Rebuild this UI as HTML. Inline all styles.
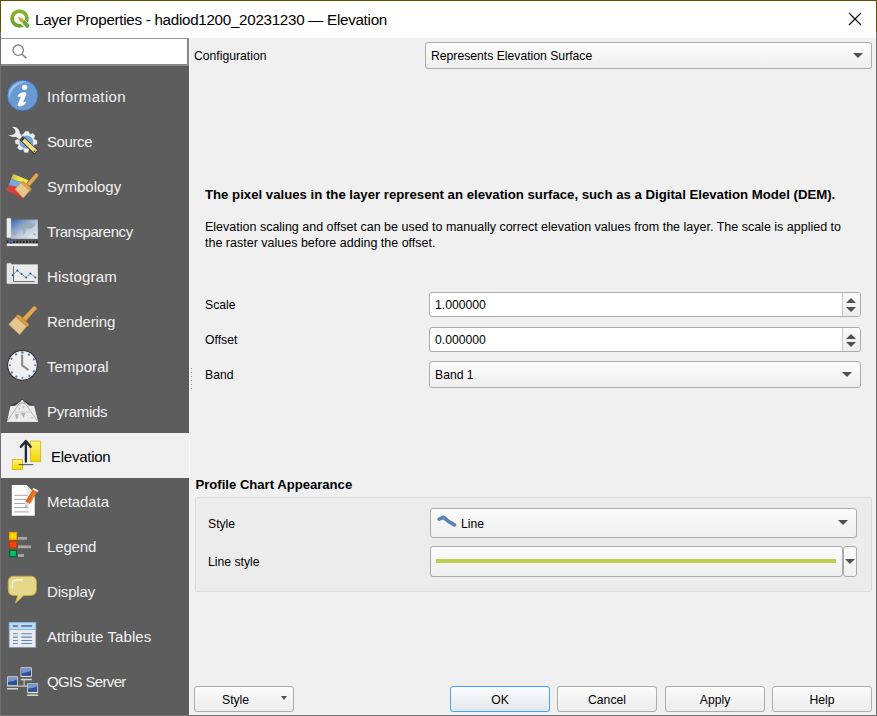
<!DOCTYPE html>
<html><head><meta charset="utf-8">
<style>
*{box-sizing:border-box;margin:0;padding:0}
html,body{width:877px;height:716px;overflow:hidden;background:#f0f0f0;font-family:"Liberation Sans",sans-serif;color:#000}
.a{position:absolute}
.t{position:absolute;white-space:nowrap;line-height:1}
.r{font-size:12.2px}
.b{font-weight:bold;font-size:13.2px}
.side{position:absolute;left:1px;top:66px;width:188px;height:649px;background:#5d5d5d}
.it{position:absolute;left:0;width:188px;height:45px}
.it .lbl{position:absolute;left:46px;top:15.6px;font-size:15px;line-height:1;color:#f2f2f2;white-space:nowrap}
.it svg{position:absolute;left:3px;top:4px;width:40px;height:40px}
.combo{position:absolute;border:1px solid #acacac;border-radius:3px;background:linear-gradient(#fcfcfc,#efefef)}
.inp{position:absolute;border:1px solid #acacac;border-radius:3px;background:#fff}
.btn{position:absolute;border:1px solid #adadad;border-radius:3px;background:linear-gradient(#fbfbfb,#ececec);text-align:center}
.arr{position:absolute;width:0;height:0;border-left:5px solid transparent;border-right:5px solid transparent;border-top:5px solid #505050}
</style></head><body>
<!-- title bar -->
<div class="a" style="left:0;top:0;width:877px;height:38px;background:#fff"></div>
<div class="a" style="left:0;top:0;width:877px;height:1px;background:#644e00"></div>
<div class="a" style="left:0;top:0;width:1px;height:32px;background:#644e00"></div>
<div class="a" style="left:876px;top:0;width:1px;height:32px;background:#644e00"></div>
<div class="a" style="left:0;top:32px;width:1px;height:684px;background:#707070"></div>
<div class="a" style="left:876px;top:32px;width:1px;height:684px;background:#707070"></div>
<div class="a" style="left:0;top:715px;width:877px;height:1px;background:#707070"></div>
<svg class="a" style="left:6px;top:5px" width="28" height="28" viewBox="0 0 716 716">
<defs><linearGradient id="qr" x1="0" y1="0" x2="0" y2="1"><stop offset="0" stop-color="#8ab52a"/><stop offset="1" stop-color="#69a12e"/></linearGradient>
<linearGradient id="qt" x1="0" y1="0" x2="1" y2="1"><stop offset="0" stop-color="#f07a20"/><stop offset="0.6" stop-color="#f0a030"/><stop offset="1" stop-color="#d8e050"/></linearGradient></defs>
<ellipse cx="345" cy="345" rx="190" ry="188" fill="none" stroke="url(#qr)" stroke-width="95"/>
<path d="M380,380 L640,640" stroke="#fff" stroke-width="150"/>
<path d="M305,300 L420,345 L470,395 L405,460 L355,410 Z" fill="url(#qt)"/>
<path d="M410,440 L470,380 L590,500 C600,520 590,560 570,580 C550,595 525,590 510,575 Z" fill="#66a83c"/>
</svg>
<div class="t" style="left:35px;top:12.1px;font-size:15.2px;letter-spacing:-0.29px">Layer Properties - hadiod1200_20231230 — Elevation</div>
<svg class="a" style="left:848px;top:12px" width="14" height="14" viewBox="0 0 14 14"><path d="M1 1L13 13M13 1L1 13" stroke="#000" stroke-width="1.1"/></svg>

<!-- search -->
<div class="a" style="left:1px;top:38px;width:188px;height:28px;background:#fff;border-top:1px solid #999;border-right:2px solid #888;border-bottom:2px solid #8a8a8a"></div>
<svg class="a" style="left:10px;top:42px" width="20" height="20" viewBox="0 0 20 20"><circle cx="8.2" cy="8.2" r="5.2" fill="none" stroke="#7f7f7f" stroke-width="1.3"/><path d="M12 12L16.3 16.3" stroke="#7f7f7f" stroke-width="1.6"/></svg>

<!-- sidebar -->
<div class="side">
<!-- 0 Information -->
<div class="it" style="top:7px">
<svg viewBox="0 0 716 716"><circle cx="332" cy="330" r="278" fill="#6a9ad2" stroke="#3d629c" stroke-width="16"/>
<path d="M90,360 C80,220 180,90 390,80 C250,110 130,200 95,360 Z" fill="#a5c4ea" stroke="#a5c4ea" stroke-width="10" stroke-linejoin="round"/>
<circle cx="368" cy="185" r="48" fill="#fff"/>
<path d="M248,338 C270,290 340,262 392,280 C405,290 402,310 396,325 L340,450 C360,452 378,440 392,448 C390,480 330,530 275,528 C240,525 240,500 250,478 L305,355 C290,350 268,360 248,350 Z" fill="#fff"/>
</svg><div class="lbl" style="letter-spacing:0.360px">Information</div></div>
<!-- 1 Source -->
<div class="it" style="top:52px">
<svg viewBox="0 0 716 716">
<path fill="#ededed" stroke="#d0d0d0" stroke-width="6" d="M385,165 L445,168 L460,222 L515,200 L555,245 L530,300 L590,330 L590,395 L530,410 L545,470 L500,510 L450,480 L430,545 L365,545 L345,485 L285,505 L240,460 L265,405 L205,385 L200,325 L258,305 L235,250 L280,205 L335,230 Z"/>
<ellipse cx="400" cy="360" rx="125" ry="120" fill="#75a3db"/>
<path d="M120,85 C200,60 285,110 290,195 L330,265 L275,320 L215,275 C150,285 80,260 65,215 C110,240 175,230 195,190 C210,150 175,110 120,85 Z" fill="#ebebeb" stroke="#333" stroke-width="10" stroke-linejoin="round"/>
<path d="M280,320 L345,255 L615,505 L545,580 Z" fill="#2e2e2e"/>
<path d="M300,322 L348,275 L597,505 L545,558 Z" fill="#f3dc80"/>
<path d="M300,322 L348,275 L370,296 L322,343 Z" fill="#2e2e2e"/>
<circle cx="545" cy="525" r="16" fill="#3a3a3a"/>
</svg><div class="lbl" style="letter-spacing:-0.400px">Source</div></div>
<!-- 2 Symbology -->
<div class="it" style="top:97px">
<svg viewBox="0 0 716 716">
<defs><linearGradient id="syy" x1="0" y1="0" x2="1" y2="0"><stop offset="0" stop-color="#c8b640"/><stop offset="0.5" stop-color="#f5e64a"/><stop offset="1" stop-color="#fbe840"/></linearGradient>
<linearGradient id="syr" x1="0" y1="0" x2="1" y2="0"><stop offset="0" stop-color="#c84848"/><stop offset="1" stop-color="#ff2a20"/></linearGradient>
<pattern id="grid" width="34" height="34" patternUnits="userSpaceOnUse" patternTransform="rotate(43)"><rect width="34" height="34" fill="#eccf98"/><path d="M0,0 L34,0 M0,0 L0,34" stroke="#c9a060" stroke-width="7"/></pattern></defs>
<path d="M165,125 L440,235 L400,300 L125,215 Z" fill="url(#syy)"/>
<path d="M125,215 L400,300 L350,380 L85,325 Z" fill="#78a8dc"/>
<path d="M85,325 L350,380 L345,560 L40,415 Z" fill="url(#syr)"/>
<path d="M565,118 C595,110 625,140 605,168 L455,345 L410,300 Z" fill="#e2aa55" stroke="#c48a38" stroke-width="8"/>
<path d="M300,280 C310,255 345,250 365,265 L480,380 C495,405 480,430 455,430 Z" fill="#dea048" stroke="#c48a38" stroke-width="8"/>
<path d="M195,398 L305,285 L460,425 L345,555 Z" fill="url(#grid)" stroke="#c9964e" stroke-width="8"/>
</svg><div class="lbl">Symbology</div></div>
<!-- 3 Transparency -->
<div class="it" style="top:142px">
<svg viewBox="0 0 716 716">
<defs><linearGradient id="tg" x1="0" y1="0" x2="1" y2="1"><stop offset="0" stop-color="#3466ad"/><stop offset="0.55" stop-color="#b8c8dc"/><stop offset="1" stop-color="#eef1f5"/></linearGradient></defs>
<rect x="125" y="135" width="480" height="345" fill="url(#tg)"/>
<path d="M290,290 C330,200 450,180 570,205 L540,260 L470,300 L400,290 L370,380 L350,410 L330,320 Z" fill="#9aa6b4" opacity="0.8"/>
<path d="M160,300 C200,290 240,330 230,380 L200,430 L180,370 Z" fill="#9aa6b4" opacity="0.8"/>
<path d="M520,380 C550,370 580,390 570,420 L525,410 Z" fill="#9aa6b4" opacity="0.8"/>
<rect x="50" y="110" width="75" height="350" rx="12" fill="#ececec" stroke="#d8d8d8" stroke-width="6"/>
<rect x="50" y="512" width="555" height="46" fill="#6e6e6e"/>
<g fill="#1e1e1e"><rect x="50" y="512" width="30" height="40"/><rect x="165" y="512" width="32" height="40"/><rect x="222" y="512" width="32" height="40"/><rect x="280" y="512" width="32" height="40"/><rect x="338" y="512" width="32" height="40"/><rect x="396" y="512" width="32" height="40"/><rect x="454" y="512" width="32" height="40"/><rect x="512" y="512" width="32" height="40"/><rect x="570" y="512" width="32" height="40"/></g>
<rect x="50" y="565" width="555" height="45" fill="#ededed"/>
<rect x="105" y="500" width="32" height="75" rx="8" fill="#2e5ea8"/>
</svg><div class="lbl" style="letter-spacing:-0.455px">Transparency</div></div>
<!-- 4 Histogram -->
<div class="it" style="top:187px">
<svg viewBox="0 0 716 716">
<rect x="125" y="135" width="480" height="345" fill="#ececec" stroke="#dadada" stroke-width="6"/>
<rect x="50" y="110" width="80" height="370" rx="14" fill="#e8e8e8" stroke="#d0d0d0" stroke-width="6"/>
<path d="M170,165 L170,440 L550,440" fill="none" stroke="#555" stroke-width="16"/>
<path d="M155,325 L238,243 L315,305 L395,365 L472,295 L562,365" fill="none" stroke="#3c68a8" stroke-width="12"/>
<g fill="#2e5a9c"><circle cx="155" cy="325" r="18"/><circle cx="238" cy="243" r="18"/><circle cx="315" cy="305" r="18"/><circle cx="395" cy="365" r="18"/><circle cx="472" cy="295" r="18"/><circle cx="562" cy="365" r="18"/></g>
</svg><div class="lbl" style="letter-spacing:0.175px">Histogram</div></div>
<!-- 5 Rendering -->
<div class="it" style="top:232px">
<svg viewBox="0 0 716 716">
<path d="M520,90 C560,60 600,100 575,130 L390,340 L330,290 Z" fill="#e4a850" stroke="#c88a30" stroke-width="10"/>
<path d="M215,255 C230,225 270,225 290,245 L440,395 C450,420 430,445 405,440 Z" fill="#dd9a3e" stroke="#c88530" stroke-width="8"/>
<path d="M85,400 L215,265 L400,440 L280,585 Z" fill="url(#grid)" stroke="#d49a50" stroke-width="10"/>
</svg><div class="lbl" style="letter-spacing:-0.100px">Rendering</div></div>
<!-- 6 Temporal -->
<div class="it" style="top:277px">
<svg viewBox="0 0 716 716">
<circle cx="330" cy="328" r="265" fill="#efefef" stroke="#2e2e2e" stroke-width="18"/>
<g fill="#4a7cc0" transform="translate(0,0)"><circle cx="330" cy="100" r="22"/><circle cx="445" cy="138" r="20"/><circle cx="535" cy="222" r="20"/><circle cx="558" cy="328" r="18"/><circle cx="535" cy="438" r="20"/><circle cx="455" cy="518" r="20"/><circle cx="330" cy="552" r="18"/><circle cx="222" cy="532" r="20"/><circle cx="140" cy="455" r="20"/><circle cx="105" cy="328" r="18"/><circle cx="135" cy="212" r="20"/><circle cx="215" cy="132" r="20"/></g>
<path d="M325,140 L325,328 L440,412" fill="none" stroke="#858a85" stroke-width="36" stroke-linejoin="round"/>
</svg><div class="lbl">Temporal</div></div>
<!-- 7 Pyramids -->
<div class="it" style="top:322px">
<svg viewBox="0 0 716 716">
<path d="M55,530 L115,250 L200,250 L325,130 L450,250 L540,250 L610,530 Z" fill="#ececec"/>
<path d="M120,248 L230,200 L270,170 L325,128 L380,170 L420,200 L540,248" fill="none" stroke="#2a2a2a" stroke-width="16" stroke-linejoin="round"/>
<path d="M200,250 L540,250" stroke="#d8d8d8" stroke-width="10"/>
<path d="M60,520 L300,165 M350,165 L600,520" fill="none" stroke="#6a6a6a" stroke-width="8"/>
<path d="M190,360 L470,360" stroke="#c0c0c0" stroke-width="14"/>
<g fill="none" stroke="#777" stroke-width="10"><circle cx="290" cy="190" r="22"/><circle cx="355" cy="190" r="22"/></g>
<path d="M195,400 L265,395 L240,490 L215,480 Z M300,375 L385,378 L350,470 Z M480,455 L530,450 L510,480 Z M255,285 L290,280 L280,325 Z M330,255 L365,260 L350,310 Z" fill="#b4b4b4"/>
<path d="M55,528 L610,528" stroke="#f6f6f6" stroke-width="14"/>
</svg><div class="lbl" style="letter-spacing:-0.286px">Pyramids</div></div>
<!-- 8 Elevation selected -->
<div class="it" style="top:367px;background:#f0f0f0">
<svg viewBox="0 0 716 716" style="left:7px">
<defs><linearGradient id="yg" x1="0" y1="0" x2="0" y2="1"><stop offset="0" stop-color="#fff27a"/><stop offset="1" stop-color="#f0d800"/></linearGradient></defs>
<rect x="400" y="72" width="185" height="365" fill="url(#yg)" stroke="#d4b400" stroke-width="14"/>
<rect x="75" y="402" width="185" height="180" fill="url(#yg)" stroke="#d4b400" stroke-width="14"/>
<path d="M320,440 L320,80 M230,175 L320,70 L405,175" fill="none" stroke="#25292d" stroke-width="42" stroke-linecap="round" stroke-linejoin="round"/>
<path d="M190,495 L455,495" stroke="#3c3c3c" stroke-width="16"/>
</svg><div class="lbl" style="left:50px;color:#000;letter-spacing:-0.25px">Elevation</div></div>
<!-- 9 Metadata -->
<div class="it" style="top:412px">
<svg viewBox="0 0 716 716">
<path d="M140,55 L400,55 L550,200 L550,605 L140,605 Z" fill="#ffffff"/>
<path d="M400,55 L400,200 L550,200 Z" fill="#e8e8e8"/>
<g stroke="#9a9a9a" stroke-width="16"><path d="M185,238 L425,238 M185,312 L400,312 M185,385 L390,385 M185,458 L445,458 M185,535 L445,535"/></g>
<path d="M530,110 L615,155 L455,395 L380,350 Z" fill="#e06a20"/>
<path d="M560,125 L485,370" stroke="#f09a40" stroke-width="16"/>
<path d="M525,105 L620,155 L600,180 L505,130 Z" fill="#f0f0f0"/>
<path d="M380,350 L455,395 L375,460 Z" fill="#d8d8d8"/>
<path d="M395,430 L375,460 L420,420 Z" fill="#333"/>
</svg><div class="lbl" style="letter-spacing:-0.071px">Metadata</div></div>
<!-- 10 Legend -->
<div class="it" style="top:457px">
<svg viewBox="0 0 716 716">
<rect x="100" y="98" width="125" height="125" fill="#ffd800" stroke="#f0a000" stroke-width="22"/>
<rect x="100" y="258" width="125" height="115" fill="#ff4a00" stroke="#c83a00" stroke-width="22"/>
<rect x="100" y="418" width="125" height="112" fill="#00c060" stroke="#006838" stroke-width="22"/>
<g fill="#a8a8a8"><rect x="250" y="178" width="160" height="50"/><rect x="250" y="330" width="235" height="50"/><rect x="250" y="485" width="108" height="50"/></g>
</svg><div class="lbl" style="letter-spacing:-0.140px">Legend</div></div>
<!-- 11 Display -->
<div class="it" style="top:502px">
<svg viewBox="0 0 716 716">
<path d="M170,75 L480,75 C540,75 580,115 580,175 L580,315 C580,380 540,420 480,420 L355,420 L205,555 L245,420 L170,420 C110,420 75,380 75,315 L75,175 C75,115 110,75 170,75 Z" fill="#e4d888" stroke="#c8a838" stroke-width="16"/>
<path d="M150,285 L150,210 C150,160 180,145 230,140 L335,140" fill="none" stroke="#ffffff" stroke-width="24" stroke-linecap="round"/>
</svg><div class="lbl" style="letter-spacing:-0.167px">Display</div></div>
<!-- 12 Attribute Tables -->
<div class="it" style="top:547px">
<svg viewBox="0 0 716 716">
<rect x="92" y="95" width="478" height="448" fill="#ebebeb" stroke="#7aa0cc" stroke-width="12"/>
<rect x="92" y="95" width="478" height="130" fill="#bcdaf0" stroke="#7aa0cc" stroke-width="12"/>
<g fill="#5b88c0"><rect x="158" y="145" width="92" height="35" rx="8"/><rect x="310" y="145" width="192" height="35" rx="8"/>
<rect x="158" y="290" width="92" height="20" rx="8"/><rect x="310" y="290" width="192" height="20" rx="8"/>
<rect x="158" y="350" width="92" height="20" rx="8"/><rect x="310" y="350" width="192" height="20" rx="8"/>
<rect x="158" y="410" width="92" height="20" rx="8"/><rect x="310" y="410" width="192" height="20" rx="8"/>
<rect x="158" y="465" width="92" height="20" rx="8"/><rect x="310" y="465" width="192" height="20" rx="8"/></g>
</svg><div class="lbl" style="letter-spacing:0.073px">Attribute Tables</div></div>
<!-- 13 QGIS Server -->
<div class="it" style="top:592px">
<svg viewBox="0 0 716 716">
<g stroke="#c8c8c0" stroke-width="22"><path d="M360,310 L360,430 M240,430 L420,430"/></g>
<g>
<rect x="295" y="92" width="205" height="175" rx="16" fill="#dcdcd4"/><rect x="310" y="108" width="175" height="140" fill="#2d5096"/><path d="M310,108 L485,108 L485,150 C420,185 360,195 310,195 Z" fill="#7b96c8"/><rect x="300" y="300" width="198" height="28" fill="#d6d6ce"/>
<rect x="55" y="255" width="195" height="185" rx="16" fill="#dcdcd4"/><rect x="70" y="270" width="165" height="145" fill="#2d5096"/><path d="M70,270 L235,270 L235,315 C175,345 120,355 70,355 Z" fill="#7b96c8"/><rect x="55" y="465" width="195" height="28" fill="#d6d6ce"/>
<rect x="415" y="375" width="195" height="185" rx="16" fill="#dcdcd4"/><rect x="430" y="390" width="165" height="145" fill="#2d5096"/><path d="M430,390 L595,390 L595,435 C535,465 480,475 430,475 Z" fill="#7b96c8"/><rect x="415" y="580" width="195" height="28" fill="#d6d6ce"/>
</g>
</svg><div class="lbl" style="letter-spacing:-0.650px">QGIS Server</div></div>
</div>


<!-- main -->
<div class="a" style="left:191px;top:368px;width:1px;height:1px;background:#9a9a9a"></div><div class="a" style="left:191px;top:372px;width:1px;height:1px;background:#9a9a9a"></div><div class="a" style="left:191px;top:376px;width:1px;height:1px;background:#9a9a9a"></div><div class="a" style="left:191px;top:380px;width:1px;height:1px;background:#9a9a9a"></div><div class="a" style="left:191px;top:384px;width:1px;height:1px;background:#9a9a9a"></div><div class="a" style="left:191px;top:388px;width:1px;height:1px;background:#9a9a9a"></div>
<div class="a" style="left:189px;top:38px;width:1px;height:677px;background:#fafafa"></div>
<div class="t r" style="left:194px;top:49.7px">Configuration</div>
<div class="combo" style="left:425px;top:42px;width:447px;height:27px"></div>
<div class="t r" style="left:431px;top:49.5px">Represents Elevation Surface</div>
<div class="arr" style="left:853px;top:53px"></div>

<div class="t b" style="left:205px;top:187.6px">The pixel values in the layer represent an elevation surface, such as a Digital Elevation Model (DEM).</div>
<div class="t" style="left:205px;top:219.2px;font-size:12.5px;line-height:16px">Elevation scaling and offset can be used to manually correct elevation values from the layer. The scale is applied to<br>the raster values before adding the offset.</div>

<div class="t r" style="left:205px;top:298.6px">Scale</div>
<div class="inp" style="left:429px;top:292px;width:432px;height:25px"></div>
<div class="t r" style="left:435px;top:298.5px">1.000000</div>
<div class="t r" style="left:205px;top:333.5px">Offset</div>
<div class="inp" style="left:429px;top:327px;width:432px;height:25px"></div>
<div class="t r" style="left:435px;top:333.5px">0.000000</div>
<div class="a" style="left:842px;top:293px;width:18px;height:23px;border-left:1px solid #c8c8c8;background:linear-gradient(#fafafa,#ececec);border-radius:0 2px 2px 0"></div>
<div class="a" style="left:846px;top:298px;width:0;height:0;border-left:5px solid transparent;border-right:5px solid transparent;border-bottom:5px solid #505050"></div>
<div class="a" style="left:846px;top:307px;width:0;height:0;border-left:5px solid transparent;border-right:5px solid transparent;border-top:5px solid #505050"></div>
<div class="a" style="left:842px;top:328px;width:18px;height:23px;border-left:1px solid #c8c8c8;background:linear-gradient(#fafafa,#ececec);border-radius:0 2px 2px 0"></div>
<div class="a" style="left:846px;top:334px;width:0;height:0;border-left:5px solid transparent;border-right:5px solid transparent;border-bottom:5px solid #505050"></div>
<div class="a" style="left:846px;top:342px;width:0;height:0;border-left:5px solid transparent;border-right:5px solid transparent;border-top:5px solid #505050"></div>
<div class="t r" style="left:205px;top:369.1px">Band</div>
<div class="combo" style="left:429px;top:361px;width:432px;height:27px"></div>
<div class="t r" style="left:435px;top:369.1px">Band 1</div>
<div class="arr" style="left:842px;top:372px"></div>

<div class="t b" style="left:195.5px;top:477.5px;font-size:13.1px">Profile Chart Appearance</div>
<div class="a" style="left:195px;top:497px;width:677px;height:95px;border:1px solid #dcdcdc;background:#ececec;border-radius:2px"></div>
<div class="t r" style="left:208px;top:518.1px">Style</div>
<div class="combo" style="left:430px;top:508px;width:427px;height:30px"></div>
<svg class="a" style="left:436px;top:514px" width="22" height="16" viewBox="0 0 22 16"><path d="M3.2,5.1 L7.6,3.3 L13.1,7.9 L18.5,10.9" fill="none" stroke="#5a82b9" stroke-width="3.7" stroke-linecap="round" stroke-linejoin="round"/></svg>
<div class="t r" style="left:461px;top:517.7px">Line</div>
<div class="arr" style="left:838px;top:520px"></div>
<div class="t r" style="left:208px;top:555.6px">Line style</div>
<div class="combo" style="left:430px;top:546px;width:413px;height:31px"></div>
<div class="a" style="left:436px;top:559px;width:400px;height:4px;background:#bfcf50"></div>
<div class="combo" style="left:843px;top:546px;width:14px;height:31px"></div>
<div class="arr" style="left:845px;top:559px"></div>

<!-- buttons -->
<div class="btn" style="left:194px;top:686px;width:100px;height:26px"></div>
<div class="t r" style="left:222px;top:693.7px">Style</div>
<div class="arr" style="left:281px;top:696px;border-left-width:3px;border-right-width:3px;border-top-width:4px"></div>
<div class="btn" style="left:450px;top:686px;width:100px;height:26px;border-color:#40a6fc;background:linear-gradient(#fbfcfd,#e3e8ec)"></div>
<div class="t r" style="left:450px;top:693.7px;width:100px;text-align:center">OK</div>
<div class="btn" style="left:557px;top:686px;width:100px;height:26px"></div>
<div class="t r" style="left:557px;top:693.7px;width:100px;text-align:center">Cancel</div>
<div class="btn" style="left:665px;top:686px;width:100px;height:26px"></div>
<div class="t r" style="left:665px;top:693.7px;width:100px;text-align:center">Apply</div>
<div class="btn" style="left:772px;top:686px;width:100px;height:26px"></div>
<div class="t r" style="left:772px;top:693.7px;width:100px;text-align:center">Help</div>
</body></html>
